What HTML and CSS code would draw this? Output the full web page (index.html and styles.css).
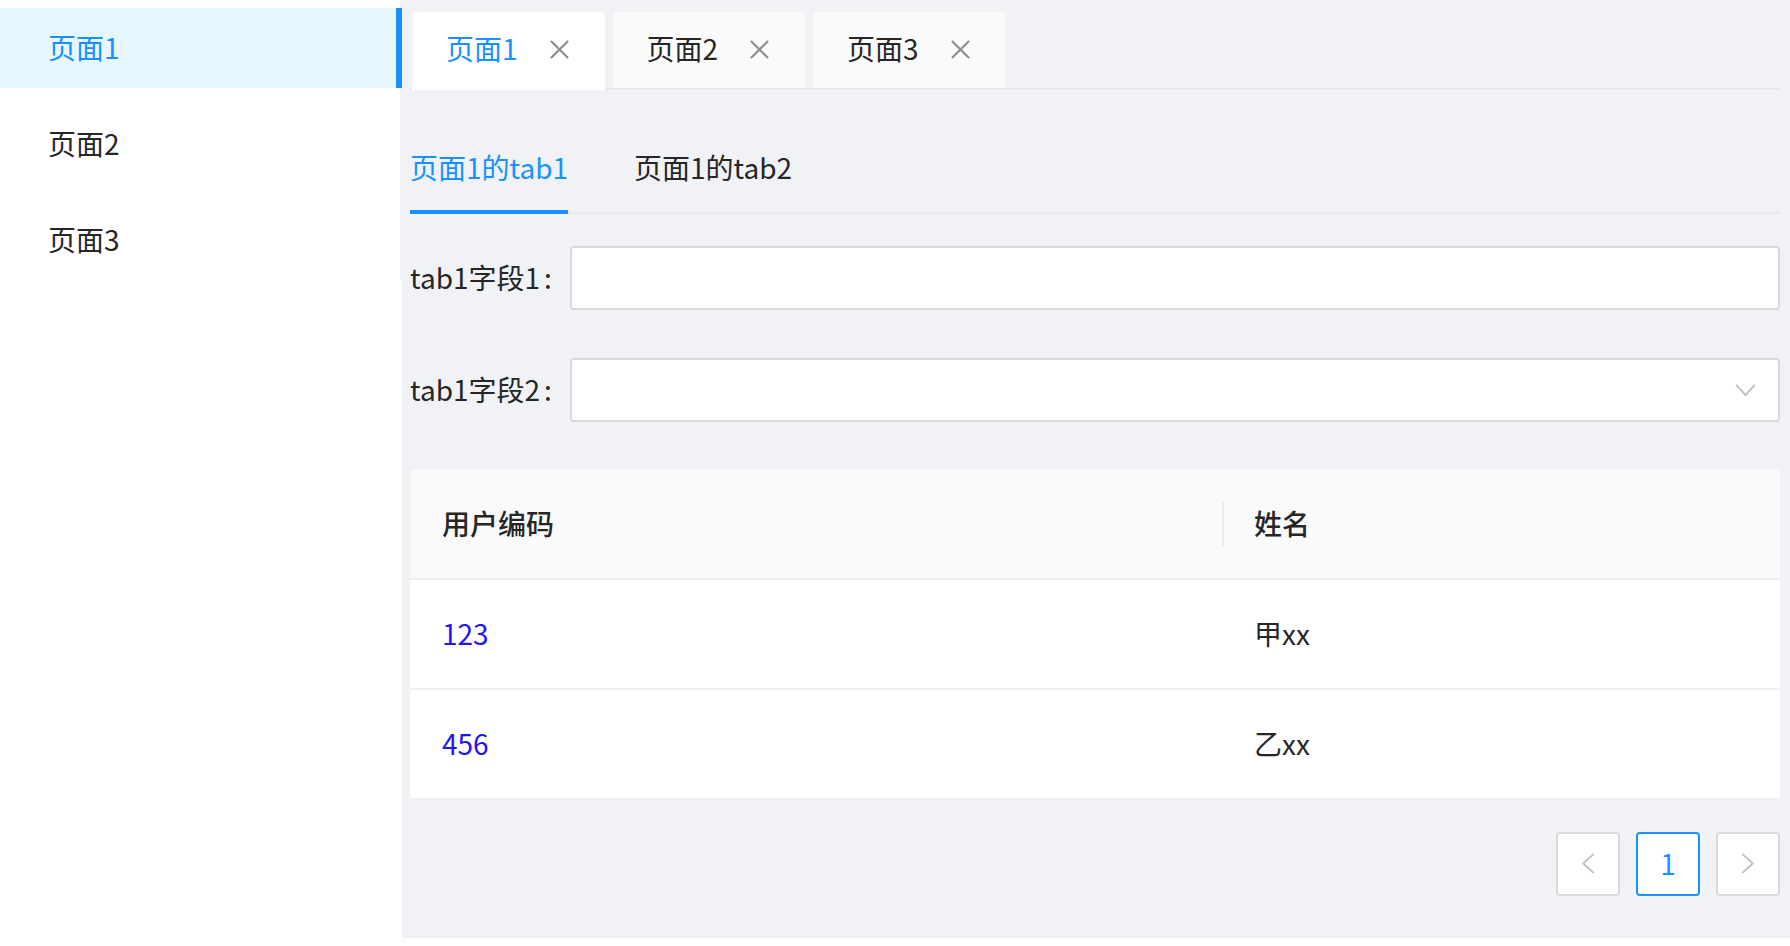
FILE: index.html
```html
<!DOCTYPE html>
<html lang="zh-CN">
<head>
<meta charset="utf-8">
<title>页面1</title>
<link rel="stylesheet" href="styles.css">
</head>
<body>
<div class="layout">
  <aside class="sider">
    <ul class="menu">
      <li class="menu-item active">页面1</li>
      <li class="menu-item">页面2</li>
      <li class="menu-item">页面3</li>
    </ul>
  </aside>
  <main class="main">
    <div class="card-tabs">
      <div class="card-tab active">
        <span class="card-tab-label">页面1</span>
        <svg class="close" viewBox="0 0 20 20"><path d="M1 1 L19 19 M19 1 L1 19"/></svg>
      </div>
      <div class="card-tab">
        <span class="card-tab-label">页面2</span>
        <svg class="close" viewBox="0 0 20 20"><path d="M1 1 L19 19 M19 1 L1 19"/></svg>
      </div>
      <div class="card-tab">
        <span class="card-tab-label">页面3</span>
        <svg class="close" viewBox="0 0 20 20"><path d="M1 1 L19 19 M19 1 L1 19"/></svg>
      </div>
    </div>

    <div class="line-tabs">
      <div class="line-tab active">页面1的tab1</div>
      <div class="line-tab">页面1的tab2</div>
    </div>

    <div class="form-row">
      <label class="form-label">tab1字段1</label>
      <div class="input"></div>
    </div>
    <div class="form-row">
      <label class="form-label">tab1字段2</label>
      <div class="input select">
        <svg class="select-arrow" viewBox="0 0 22 14"><path d="M1 1 L11 12 L21 1"/></svg>
      </div>
    </div>

    <table class="table">
      <thead>
        <tr>
          <th class="col-code">用户编码</th>
          <th class="col-name">姓名</th>
        </tr>
      </thead>
      <tbody>
        <tr>
          <td><a class="link">123</a></td>
          <td>甲xx</td>
        </tr>
        <tr>
          <td><a class="link">456</a></td>
          <td>乙xx</td>
        </tr>
      </tbody>
    </table>

    <div class="pagination">
      <div class="page-item disabled">
        <svg class="page-arrow" viewBox="0 0 14 22"><path d="M13 1 L2 11 L13 21"/></svg>
      </div>
      <div class="page-item current">1</div>
      <div class="page-item disabled">
        <svg class="page-arrow" viewBox="0 0 14 22"><path d="M1 1 L12 11 L1 21"/></svg>
      </div>
    </div>
  </main>
</div>
</body>
</html>
```

FILE: styles.css
```css
* {
  box-sizing: border-box;
}

html, body {
  margin: 0;
  padding: 0;
  background: #ffffff;
}

body {
  font-family: "Noto Sans CJK SC", "Noto Sans", sans-serif;
  font-size: 28px;
  line-height: 44px;
  color: #262626;
}

.layout {
  display: flex;
  align-items: flex-start;
  width: 100%;
}

/* Sidebar */
.sider {
  flex: none;
  width: 402px;
  border-right: 2px solid #f0f0f0;
  background: #ffffff;
}

.menu {
  list-style: none;
  margin: 0;
  padding: 8px 0 0 0;
  display: flex;
  flex-direction: column;
  gap: 16px;
}

.menu-item {
  position: relative;
  height: 80px;
  line-height: 78px;
  padding-left: 48px;
  color: #262626;
}

.menu-item.active {
  background: #e6f7ff;
  color: #1890ff;
}

.menu-item.active::after {
  content: "";
  position: absolute;
  top: 0;
  bottom: 0;
  right: -2px;
  width: 6px;
  background: #1890ff;
}

/* Main */
.main {
  flex: 1;
  min-width: 0;
  background: #f0f2f5;
  padding: 12px 10px 10px 8px;
}

/* Card tabs */
.card-tabs {
  display: flex;
  align-items: flex-start;
  gap: 8px;
  padding-left: 2px;
  border-bottom: 2px solid #e9e9ea;
  margin-bottom: 32px;
  height: 78px;
}

.card-tab {
  display: flex;
  align-items: center;
  height: 76px;
  padding: 0 36px 4px 34px;
  background: #fafafa;
  border-radius: 4px 4px 0 0;
  color: #262626;
}

.card-tab.active {
  background: #ffffff;
  color: #1890ff;
  height: 78px;
  padding-bottom: 6px;
}

.close {
  width: 19px;
  height: 19px;
  margin-left: 32px;
  margin-top: 2px;
  fill: none;
  stroke: #8c8c8c;
  stroke-width: 2.2;
}

/* Line tabs */
.line-tabs {
  display: flex;
  border-bottom: 2px solid #e9e9ea;
  margin-bottom: 32px;
}

.line-tab {
  position: relative;
  padding: 23px 0 23px 0;
  margin-right: 66px;
  color: #262626;
}

.line-tab.active {
  color: #1890ff;
}

.line-tab.active::after {
  content: "";
  position: absolute;
  left: 0;
  right: 0;
  bottom: -2px;
  height: 4px;
  background: #1890ff;
}

/* Form */
.form-row {
  display: flex;
  align-items: center;
  margin-bottom: 48px;
}

.form-label {
  flex: none;
  color: #262626;
  padding-bottom: 3px;
}

.form-label::after {
  content: ":";
  margin: 0 18px 0 4px;
}

.input {
  flex: 1;
  height: 64px;
  background: #ffffff;
  border: 2px solid #d9d9d9;
  border-radius: 4px;
  display: flex;
  align-items: center;
  justify-content: flex-end;
  padding-right: 22px;
}

.select-arrow {
  width: 21px;
  height: 13px;
  fill: none;
  stroke: #bfbfbf;
  stroke-width: 2;
}

/* Table */
.table {
  width: 100%;
  border-collapse: separate;
  border-spacing: 0;
  background: #ffffff;
  border-radius: 4px 4px 0 0;
  overflow: hidden;
}

.table th,
.table td {
  text-align: left;
  padding: 31px 32px 33px 32px;
  line-height: 44px;
  border-bottom: 2px solid #f0f0f0;
}

.table th {
  background: #fafafa;
  font-weight: 500;
  color: #262626;
}

.col-code {
  width: 812px;
}

.col-name {
  position: relative;
}

.col-name::before {
  content: "";
  position: absolute;
  left: 0;
  top: 32px;
  width: 2px;
  height: 44px;
  background: #ebebeb;
}

.link {
  color: #2414f5;
  text-decoration: none;
}

/* Pagination */
.pagination {
  display: flex;
  justify-content: flex-end;
  gap: 16px;
  margin: 32px 0;
}

.page-item {
  width: 64px;
  height: 64px;
  border: 2px solid #d9d9d9;
  border-radius: 4px;
  background: #ffffff;
  display: flex;
  align-items: center;
  justify-content: center;
  color: #262626;
  padding-bottom: 2px;
}

.page-item.current {
  border-color: #1890ff;
  color: #1890ff;
}

.page-arrow {
  width: 14px;
  height: 21px;
  fill: none;
  stroke: #c4c4c4;
  stroke-width: 2;
}
```
